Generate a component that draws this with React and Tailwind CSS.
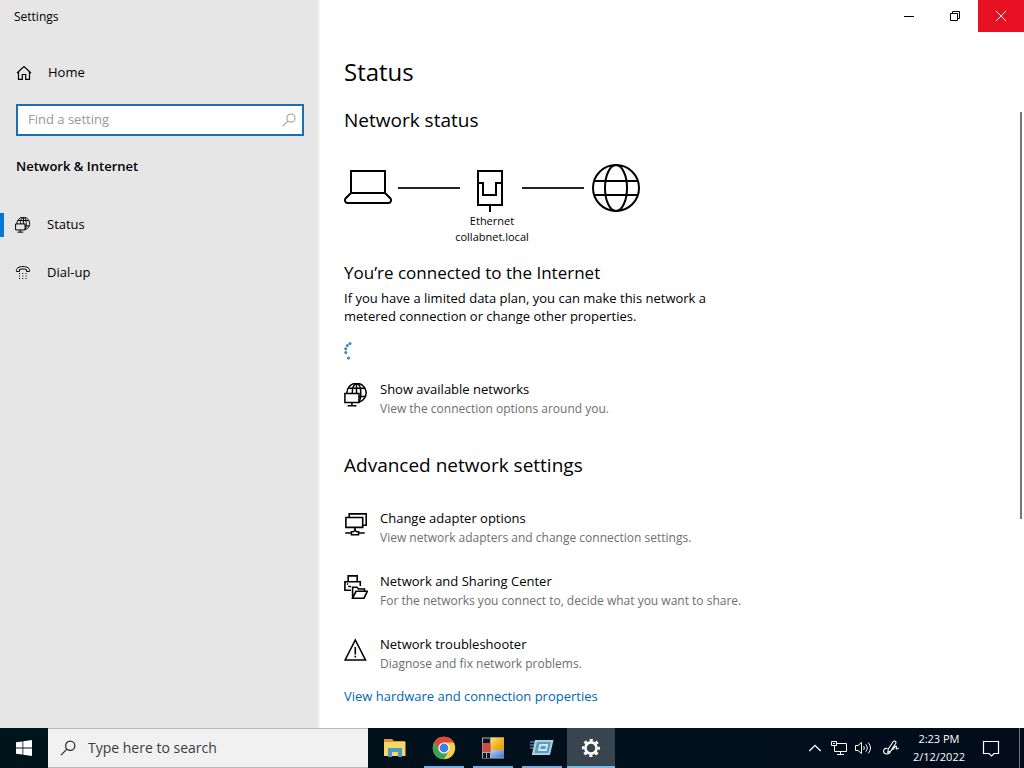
import React, { useState } from 'react'

const HomeIcon = () => (
  <svg className="h-4 w-4" viewBox="0 0 16 16" fill="none" stroke="currentColor" strokeWidth="1.2">
    <path d="M1 8L8 1.5L15 8M2.5 7V14.4H6.3V9.5H9.7V14.4H13.5V7" />
  </svg>
)

const GlobeMonitorIcon = ({ className }) => (
  <svg className={className} viewBox="0 0 24 24" fill="none" stroke="currentColor" strokeWidth="1.5">
    <path d="M2.9 10.4A9.6 9.6 0 1 1 15.4 19" />
    <path d="M4.2 5.2H20.8M15 13.400H21.300" />
    <path d="M8.200 10.400C8.200 4.500 10 0.800 12.500 0.800S16.800 4.500 16.800 10S16.200 17 15 19M12.500 0.800V10.400" />
    <path d="M0.900 10.400H15V19.400H0.900ZM7.900 19.400V22.700M3.600 22.700H12.400" />
  </svg>
)

const PhoneIcon = () => (
  <svg className="h-4 w-4" viewBox="0 0 16 16" fill="none" stroke="currentColor">
    <path d="M1.500 6.500C0.700 3.300 4 1.500 8 1.500S15.300 3.300 14.500 6.500H11.500V4.500C9.500 3.800 6.500 3.800 4.500 4.500V6.500Z" />
    <path d="M4 8.500H13M4 11H13M4 13.500H13" strokeDasharray="1 2.300" />
  </svg>
)

const AdapterIcon = ({ className }) => (
  <svg className={className} viewBox="0 0 24 24" fill="none" stroke="currentColor" strokeWidth="1.6">
    <path d="M5.200 5.500V1.900H22.200V13.200H18.500" />
    <path d="M1.900 5.500H18.700V15.400H1.900ZM11 15.400V18" />
    <path d="M1.200 21H7.400M14.600 21H20.700M7.400 22.800V19.700H9.500L11 18L12.500 19.700H14.600V22.800Z" strokeWidth="1.400" />
  </svg>
)

const SharingIcon = ({ className }) => (
  <svg className={className} viewBox="0 0 24 24" fill="none" stroke="currentColor" strokeWidth="1.600">
    <path d="M4.200 6.500V0.900H13.200V6.500M7 15.200H0.900V6.800H16.300V11M4.200 11.500H7M2.800 9H4.200" />
    <path d="M8.600 23.200V12.300H13L14.500 14H20.500V16.300M8.600 23.200L12 16.300H23.300L20 23.200Z" />
  </svg>
)

const WarningIcon = ({ className }) => (
  <svg className={className} viewBox="0 0 24 24" fill="none" stroke="currentColor" strokeWidth="1.600">
    <path d="M11.300 2L21.500 22H1.100ZM11.300 9V16.500M11.300 17.800V19.600" />
  </svg>
)

const LaptopIcon = () => (
  <svg className="h-12 w-12" viewBox="0 0 48 48" fill="none" stroke="black" strokeWidth="2">
    <path d="M7 7H41V29H7ZM7 29L1.500 34.500C0.500 36 1 39 3.500 39H44.500C47 39 47.500 36 46.500 34.500L41 29" />
  </svg>
)

const EthernetIcon = () => (
  <svg className="h-12 w-[62px]" viewBox="2 0 62 48" fill="none" stroke="black" strokeWidth="2">
    <path d="M20 7H44V41H20ZM20 19H25V31H38V19H44M32 41V48" />
  </svg>
)

const GlobeIcon = () => (
  <svg className="h-12 w-12" viewBox="0 0 48 48" fill="none" stroke="black" strokeWidth="2">
    <circle cx="24" cy="24" r="23" />
    <ellipse cx="24" cy="24" rx="11" ry="23" />
    <path d="M3 17H45M3 31H45" />
  </svg>
)

const FolderIcon = () => (
  <svg className="h-6 w-6" viewBox="0 0 24 24">
    <path d="M1 3H9L11 5H22V8H1Z" fill="#d99a2b" />
    <path d="M1 6H22.500V20H1Z" fill="#fbd667" />
    <path d="M5 21V12H19V21H15V16H9V21Z" fill="#4a9cc0" />
  </svg>
)

const ChromeIcon = () => (
  <svg className="h-6 w-6" viewBox="0 0 24 24">
    <circle cx="12" cy="12" r="11.200" fill="#f7cf45" />
    <path d="M2.300 6.400A11.200 11.200 0 0 1 21.700 6.400H12L7.150 14.800Z" fill="#e0473a" />
    <path d="M2.300 6.400A11.200 11.200 0 0 0 12 23.200L16.850 14.800L12 17.600L7.150 14.800Z" fill="#36a355" />
    <circle cx="12" cy="12" r="5.600" fill="white" />
    <circle cx="12" cy="12" r="4.400" fill="#3f7fe0" />
  </svg>
)

const BlocksIcon = () => (
  <svg className="h-6 w-6" viewBox="0 0 24 24">
    <defs>
      <linearGradient id="yellow" x1="0" y1="0" x2="1" y2="1">
        <stop offset="0" stopColor="#fbe08a" />
        <stop offset="0.5" stopColor="#f3b71d" />
        <stop offset="1" stopColor="#e09a10" />
      </linearGradient>
      <linearGradient id="blue" x1="0" y1="0" x2="1" y2="1">
        <stop offset="0" stopColor="#b4d3f7" />
        <stop offset="1" stopColor="#3f74cf" />
      </linearGradient>
    </defs>
    <path d="M1 1.500H23V22.500H1Z" fill="#a9adb1" />
    <path d="M2 2.500H9V7H2ZM2 17H5V22H2ZM6 17H9V22H6Z" fill="#10151c" />
    <path d="M1.500 7H9.500V16H1.500Z" fill="#cf4a44" />
    <path d="M10 1.500H23V14H10Z" fill="url(#yellow)" />
    <path d="M10 14H23V21.500H10Z" fill="url(#blue)" />
  </svg>
)

const RunIcon = () => (
  <svg className="h-6 w-6" viewBox="0 0 24 24">
    <path d="M5 4H23.500L20 19H1.800Z" fill="#a9d3e4" />
    <path d="M7 6H21L18.400 17H4.500Z" fill="#5f9dbb" />
    <path d="M9.500 8H18.300L16.600 15H7.800Z" fill="#cfe7f0" />
    <path d="M11 10H16L15.300 13H10.300Z" fill="#5c9cba" />
    <path d="M0 6H5M0 9H4M0 12H3" stroke="#7fb3c9" />
  </svg>
)

const GearIcon = () => (
  <svg className="h-6 w-6" viewBox="0 0 24 24" fill="none" stroke="white">
    <circle cx="12" cy="12" r="5.600" strokeWidth="2.600" />
    <circle cx="12" cy="12" r="7.800" strokeWidth="2.600" strokeDasharray="3.060 3.066" strokeDashoffset="1.530" />
  </svg>
)

const SearchIcon = ({ className }) => (
  <svg className={className} viewBox="0 0 18 18" fill="none" stroke="currentColor" strokeWidth="1.400">
    <circle cx="11.500" cy="6.500" r="5.200" />
    <path d="M7.800 10.200L1 17" />
  </svg>
)

const navItems = [
  { label: 'Status', icon: <GlobeMonitorIcon className="h-4 w-4" /> },
  { label: 'Dial-up', icon: <PhoneIcon /> },
]

const advanced = [
  { title: 'Change adapter options', text: 'View network adapters and change connection settings.', Icon: AdapterIcon },
  { title: 'Network and Sharing Center', text: 'For the networks you connect to, decide what you want to share.', Icon: SharingIcon },
  { title: 'Network troubleshooter', text: 'Diagnose and fix network problems.', Icon: WarningIcon },
]

const apps = [
  { name: 'File Explorer', icon: <FolderIcon />, line: '' },
  { name: 'Google Chrome', icon: <ChromeIcon />, line: 'w-10 bg-[#76b0e0]' },
  { name: 'Server Manager', icon: <BlocksIcon />, line: 'w-10 bg-[#76b0e0]' },
  { name: 'Run', icon: <RunIcon />, line: 'w-10 bg-[#76b0e0]' },
  { name: 'Settings', icon: <GearIcon />, line: 'w-12 bg-[#76b9ed]', active: true },
]

const SettingRow = ({ title, text, Icon }) => (
  <button type="button" className="flex items-start gap-3 text-left">
    <Icon className="mt-1 h-6 w-6 shrink-0" />
    <span className="flex flex-col">
      <span className="text-[13px] leading-5">{title}</span>
      <span className="text-xs leading-5 text-[#6e6e6e]">{text}</span>
    </span>
  </button>
)

const Sidebar = () => {
  const [selected, setSelected] = useState('Status')
  const [query, setQuery] = useState('')

  return (
    <aside className="w-80 shrink-0 border-r-2 border-[#f2f2f2] bg-[#e6e6e6]">
      <div className="h-8 pt-px pl-3.5 text-xs leading-8">Settings</div>
      <a href="#home" className="mt-[17px] flex h-12 items-center gap-4 pl-4 text-[13px]">
        <HomeIcon />
        Home
      </a>
      <label className="mt-[7px] mr-3.5 ml-4 flex h-8 items-center border-2 border-[#1a6fb5] bg-white pr-1.5 pl-2.5">
        <input
          type="text"
          aria-label="Find a setting"
          placeholder="Find a setting"
          value={query}
          onChange={(e) => setQuery(e.target.value)}
          className="min-w-0 flex-1 text-[13px] outline-none placeholder:text-[#999999]"
        />
        <SearchIcon className="h-3.5 w-3.5 text-[#a0a0a0]" />
      </label>
      <h2 className="mt-5 pl-4 text-[13px] leading-5 font-semibold">Network &amp; Internet</h2>
      <nav className="mt-[25px] flex flex-col">
        {navItems.map((item) => (
          <button key={item.label} type="button" onClick={() => setSelected(item.label)} className="flex h-12 items-center text-[13px]">
            <span className={`h-6 w-1 ${selected === item.label ? 'bg-[#0078d7]' : ''}`} />
            <span className="mr-4 ml-[11px]">{item.icon}</span>
            {item.label}
          </button>
        ))}
      </nav>
    </aside>
  )
}

const WindowButtons = () => (
  <div className="flex h-8 justify-end">
    <button type="button" aria-label="Minimize" className="flex w-[46px] items-center justify-center">
      <svg className="h-2.5 w-2.5" viewBox="0 0 10 10" stroke="black"><path d="M0 5.500H10" /></svg>
    </button>
    <button type="button" aria-label="Restore" className="flex w-[46px] items-center justify-center">
      <svg className="h-2.5 w-2.5" viewBox="0 0 10 10" fill="none" stroke="black"><path d="M0.500 2.500H7.500V9.500H0.500ZM2.500 2.500V0.500H9.500V7.500H7.500" /></svg>
    </button>
    <button type="button" aria-label="Close" className="flex w-[46px] items-center justify-center bg-[#e81123]">
      <svg className="h-2.5 w-2.5" viewBox="0 0 10 10" stroke="white"><path d="M0 0L10 10M10 0L0 10" /></svg>
    </button>
  </div>
)

const StatusPage = () => (
  <main className="flex flex-1 flex-col items-start pt-6 pb-5 pl-6">
    <h1 className="text-2xl leading-8">Status</h1>
    <h2 className="mt-4 text-[19px] leading-8">Network status</h2>

    <div className="mt-7">
      <div className="flex items-center">
        <LaptopIcon />
        <span className="ml-1.5 h-0.5 w-[62px] bg-[#222222]" />
        <EthernetIcon />
        <span className="mr-2 h-0.5 w-[62px] bg-[#222222]" />
        <GlobeIcon />
      </div>
      <div className="pt-px text-center text-[11px] leading-4">
        <div>Ethernet</div>
        <div>collabnet.local</div>
      </div>
    </div>

    <h3 className="mt-4 text-[17px] leading-6">You’re connected to the Internet</h3>
    <p className="mt-1 max-w-96 text-[13px] leading-[18px]">
      If you have a limited data plan, you can make this network a metered connection or change other properties.
    </p>

    <svg className="mt-4 h-5 w-5" viewBox="0 0 20 20" fill="#3a86b4" role="img" aria-label="Loading">
      <circle cx="6" cy="2.500" r="1.500" />
      <circle cx="3.300" cy="4.500" r="1.500" />
      <circle cx="1.700" cy="7.800" r="1.500" />
      <circle cx="1.800" cy="11.500" r="1.500" />
      <circle cx="4.500" cy="17" r="1.600" />
    </svg>

    <div className="mt-[18px]">
      <SettingRow title="Show available networks" text="View the connection options around you." Icon={GlobeMonitorIcon} />
    </div>

    <h2 className="mt-[30px] text-[19px] leading-8">Advanced network settings</h2>
    <div className="mt-[27px] flex flex-col gap-[23px]">
      {advanced.map((row) => <SettingRow key={row.title} {...row} />)}
    </div>
    <a href="#properties" className="mt-3 text-[13px] leading-5 text-[#0066b4]">View hardware and connection properties</a>
  </main>
)

const Taskbar = () => (
  <footer className="flex h-10 shrink-0 bg-linear-to-r from-[#00141c] to-[#020c1b] text-white">
    <button type="button" aria-label="Start" className="flex w-12 items-center justify-center">
      <svg className="h-4 w-4" viewBox="0 0 16 16" fill="white">
        <path d="M0 2.300L6.500 1.400V7.600H0ZM7.300 1.300L16 0V7.600H7.300ZM0 8.400H6.500V14.600L0 13.700ZM7.300 8.400H16V16L7.300 14.700Z" />
      </svg>
    </button>
    <label className="flex w-80 items-center gap-3 border-y border-[#b9b9b9] bg-[#f1f1f1] pl-3 text-[#2b2b2b]">
      <SearchIcon className="h-4 w-4" />
      <input type="text" aria-label="Type here to search" placeholder="Type here to search" className="min-w-0 flex-1 text-sm outline-none placeholder:text-[#3b3b3b]" />
    </label>
    <div className="ml-[3px] flex gap-px">
      {apps.map((app) => (
        <button key={app.name} type="button" aria-label={app.name} className={`flex w-12 flex-col items-center ${app.active ? 'bg-[#38444e]' : ''}`}>
          <span className="flex flex-1 items-center pt-0.5">{app.icon}</span>
          <span className={`h-0.5 ${app.line}`} />
        </button>
      ))}
    </div>

    <div className="ml-auto flex items-center">
      <button type="button" aria-label="Show hidden icons" className="px-2">
        <svg className="h-4 w-4" viewBox="0 0 16 16" fill="none" stroke="white" strokeWidth="1.300"><path d="M2.300 11L8 5.300L13.700 11" /></svg>
      </button>
      <button type="button" aria-label="Network">
        <svg className="h-4 w-4" viewBox="0 0 16 16" fill="none" stroke="white">
          <path d="M5.500 3.500H15.500V11.500H3.500V6M9.500 11.500V14.500M6 14.500H13M0.500 1.500H5.500V5.500H0.500ZM2 3.500H4" />
        </svg>
      </button>
      <button type="button" aria-label="Volume" className="ml-2">
        <svg className="h-4 w-4" viewBox="0 0 16 16" fill="none" stroke="white">
          <path d="M0.500 5.500H3L6.500 2.500V13.500L3 10.500H0.500ZM8.500 6C9.500 7 9.500 9 8.500 10M10.700 4.300C12.700 6.500 12.700 9.500 10.700 11.700M13 2.500C16.300 6 16.300 10 13 13.500" />
        </svg>
      </button>
      <button type="button" aria-label="Pen workspace" className="ml-3">
        <svg className="h-4 w-4" viewBox="0 0 16 16" fill="none" stroke="white" strokeWidth="1.100">
          <path d="M4.500 8.500C1.500 7.800 0.300 10 0.700 12C1.500 15 6 14.500 7.500 12" />
          <path d="M4.800 12.500L5.300 9L10.300 1.500C11.500 0.300 13.500 1.500 12.800 3.200L7.800 11ZM9.500 10L12 6.700C13.200 5.500 14 6.500 13.300 7.800C12.600 9.300 13.800 9.300 15.700 8" />
        </svg>
      </button>
      <time className="ml-3.5 text-center text-[11px] leading-[18px]">
        <div>2:23 PM</div>
        <div>2/12/2022</div>
      </time>
      <button type="button" aria-label="Notifications" className="ml-[17px] pt-0.5">
        <svg className="h-[18px] w-[18px]" viewBox="0 0 18 18" fill="none" stroke="white" strokeWidth="1.200">
          <path d="M1.500 1.500H16.500V13.500H12L9.500 16L7 13.500H1.500Z" />
        </svg>
      </button>
      <span className="mr-1 ml-[19px] h-10 w-px bg-[#6c757d]" />
    </div>
  </footer>
)

const App = () => {
  return (
    <div className="flex min-h-screen flex-col bg-white font-['Open_Sans','Noto_Sans',sans-serif] text-black">
      <div className="flex flex-1">
        <Sidebar />
        <div className="flex flex-1 flex-col">
          <WindowButtons />
          <div className="flex flex-1">
            <StatusPage />
            <div className="mr-0.5 flex w-0.5 flex-col pt-20">
              <div className="flex-[66] bg-[#767676]" />
              <div className="flex-[34]" />
            </div>
          </div>
        </div>
      </div>
      <Taskbar />
    </div>
  )
}

export default App
